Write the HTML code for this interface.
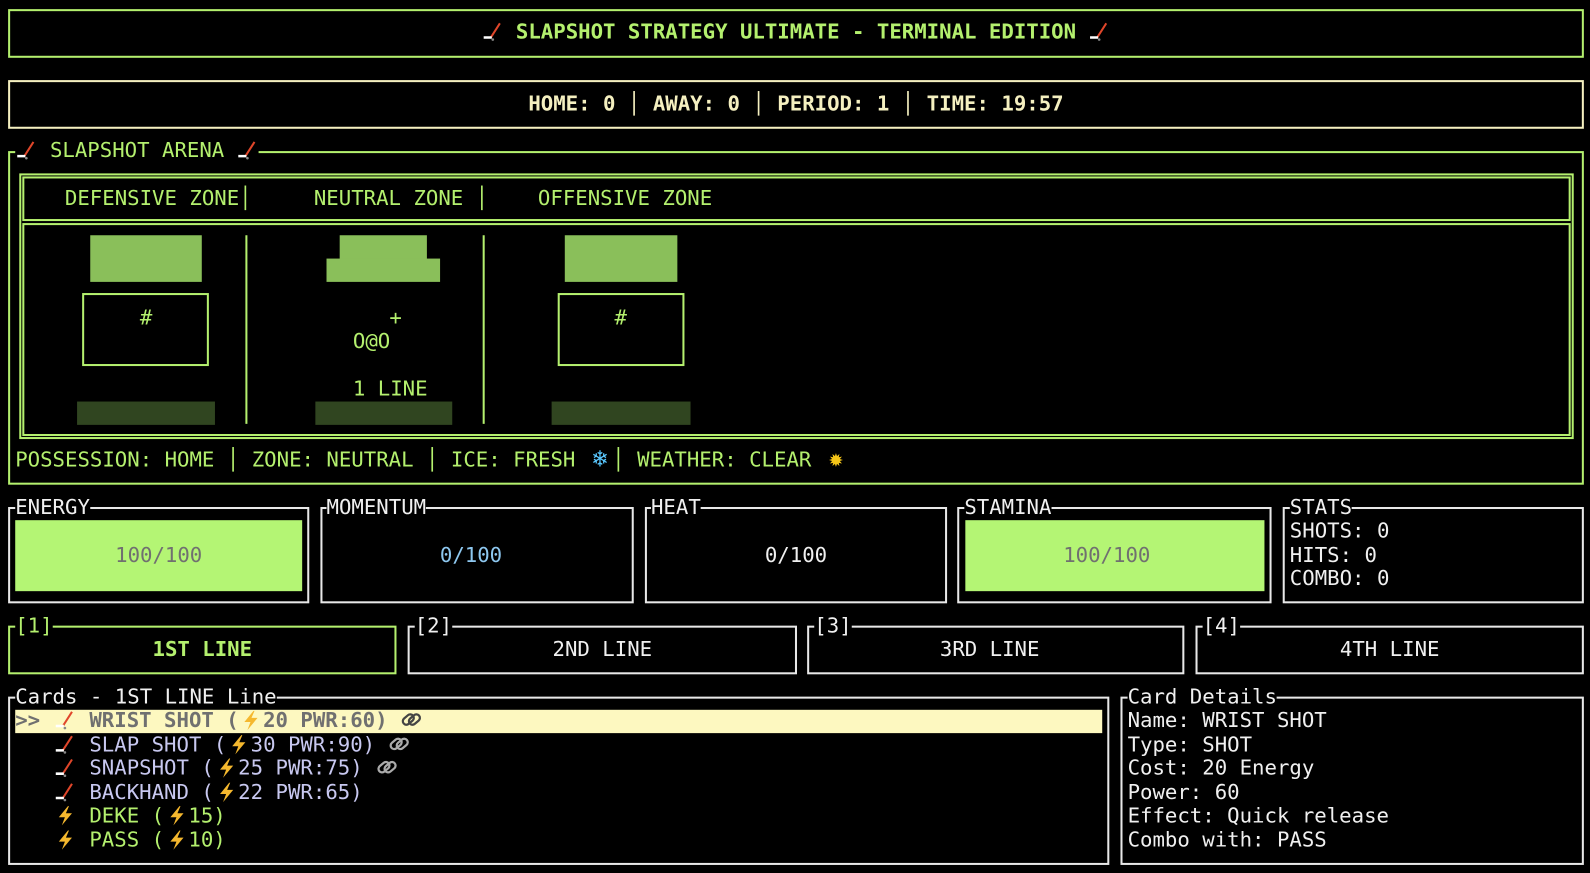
<!DOCTYPE html>
<html><head><meta charset="utf-8"><style>
*{margin:0;padding:0;box-sizing:border-box}
body{width:1590px;height:873px;background:#000;overflow:hidden}
#r{position:relative;width:1568px;height:861px;transform:scale(1.0140);transform-origin:0 0;font-family:"DejaVu Sans Mono","Liberation Mono",monospace;font-size:20.4px;line-height:23.5px;color:#b4f06e}
.a{position:absolute;white-space:pre}
.b{position:absolute;border:2px solid #b4f06e}
.w{border-color:#e8e8e8}
.lbl{position:absolute;background:#000;white-space:pre;line-height:23.5px}
.wt{color:#f0f0f0}
svg{vertical-align:-3px}
.ic{display:inline-block;width:24px;text-align:center;font-size:24px;line-height:20px}
</style></head><body><div id="r">
<svg width="0" height="0" style="position:absolute"><defs>
<symbol id="st" viewBox="0 0 22 20"><line x1="18" y1="2" x2="9" y2="16" stroke="#e0462a" stroke-width="2"/><line x1="2" y1="16" x2="10" y2="16" stroke="#fff" stroke-width="2.5"/><circle cx="11" cy="18" r="1.3" fill="#888"/></symbol>
<symbol id="bo" viewBox="0 0 24 20"><polygon points="15,1 6,12 12,12 9,20 19,8 13,8 16,1" fill="#f5b82e"/></symbol>
<symbol id="ch" viewBox="0 0 24 20"><g fill="none" stroke-width="2.2"><rect x="3" y="6" width="12" height="7" rx="3.5" transform="rotate(-40 9 10)"/><rect x="9" y="6" width="12" height="7" rx="3.5" transform="rotate(-40 15 10)"/></g></symbol>
</defs></svg>
<div class="b" style="left:8px;top:9px;width:1554px;height:48px"></div>
<div class="a" style="left:0;width:1570px;top:20px;text-align:center;font-weight:bold"><svg width="22" height="20"><use href="#st"/></svg> SLAPSHOT STRATEGY ULTIMATE - TERMINAL EDITION <svg width="22" height="20"><use href="#st"/></svg></div>
<div class="b" style="left:8px;top:79px;width:1554px;height:48px;border-color:#f5f0c0"></div>
<div class="a" style="left:0;width:1570px;top:91px;text-align:center;font-weight:bold;color:#f5f0c0">HOME: 0 │ AWAY: 0 │ PERIOD: 1 │ TIME: 19:57</div>
<div class="b" style="left:8px;top:149px;width:1554px;height:329px"></div>
<div class="lbl" style="left:15px;top:137px"><svg width="22" height="20"><use href="#st"/></svg> SLAPSHOT ARENA <svg width="22" height="20"><use href="#st"/></svg></div>
<div class="b" style="left:19px;top:171px;width:1533px;height:262px"></div>
<div class="b" style="left:22px;top:174px;width:1527px;height:44px"></div>
<div class="b" style="left:22px;top:220px;width:1527px;height:210px"></div>
<div class="a" style="left:64px;top:184px">DEFENSIVE ZONE│     NEUTRAL ZONE │    OFFENSIVE ZONE</div>
<div style="position:absolute;left:242px;top:232px;width:2px;height:186px;background:#b4f06e"></div>
<div style="position:absolute;left:476px;top:232px;width:2px;height:186px;background:#b4f06e"></div>
<div style="position:absolute;left:89px;top:232px;width:110px;height:46px;background:#8abf5a"></div>
<div style="position:absolute;left:335px;top:232px;width:86px;height:24px;background:#8abf5a"></div>
<div style="position:absolute;left:322px;top:255px;width:112px;height:23px;background:#8abf5a"></div>
<div style="position:absolute;left:557px;top:232px;width:111px;height:46px;background:#8abf5a"></div>
<div class="b" style="left:81px;top:289px;width:125px;height:72px"></div>
<div class="b" style="left:550px;top:289px;width:125px;height:72px"></div>
<div class="a" style="left:138px;top:302px">#</div>
<div class="a" style="left:606px;top:302px">#</div>
<div class="a" style="left:384px;top:302px">+</div>
<div class="a" style="left:348px;top:325px">O@O</div>
<div class="a" style="left:348px;top:372px">1 LINE</div>
<div style="position:absolute;left:76px;top:396px;width:136px;height:23px;background:#304520"></div>
<div style="position:absolute;left:311px;top:396px;width:135px;height:23px;background:#304520"></div>
<div style="position:absolute;left:544px;top:396px;width:137px;height:23px;background:#304520"></div>
<div class="a" style="left:15px;top:442px">POSSESSION: HOME │ ZONE: NEUTRAL │ ICE: FRESH <span class="ic" style="color:#5ac8ff">❄</span>│ WEATHER: CLEAR <span class="ic" style="color:#f5c518">✹</span></div>
<div class="b w" style="left:8px;top:500px;width:297px;height:95px"></div>
<div class="lbl wt" style="left:15px;top:489px">ENERGY</div>
<div style="position:absolute;left:15px;top:513px;width:283px;height:70px;background:#b4f574"></div>
<div class="a" style="left:15px;width:283px;text-align:center;top:536px;color:#707070">100/100</div>
<div class="b w" style="left:316px;top:500px;width:309px;height:95px"></div>
<div class="lbl wt" style="left:322px;top:489px">MOMENTUM</div>
<div class="a" style="left:310px;width:309px;text-align:center;top:536px;color:#8ec8f0">0/100</div>
<div class="b w" style="left:636px;top:500px;width:298px;height:95px"></div>
<div class="lbl wt" style="left:642px;top:489px">HEAT</div>
<div class="a wt" style="left:636px;width:298px;text-align:center;top:536px">0/100</div>
<div class="b w" style="left:944px;top:500px;width:310px;height:95px"></div>
<div class="lbl wt" style="left:951px;top:489px">STAMINA</div>
<div style="position:absolute;left:952px;top:513px;width:295px;height:70px;background:#b4f574"></div>
<div class="a" style="left:944px;width:295px;text-align:center;top:536px;color:#707070">100/100</div>
<div class="b w" style="left:1265px;top:500px;width:297px;height:95px"></div>
<div class="lbl wt" style="left:1272px;top:489px">STATS</div>
<div class="a wt" style="left:1272px;top:512px">SHOTS: 0
HITS: 0
COMBO: 0</div>
<div class="b" style="left:8px;top:617px;width:383px;height:48px"></div>
<div class="lbl" style="left:15px;top:606px">[1]</div>
<div class="a" style="left:8px;width:383px;text-align:center;top:629px;font-weight:bold">1ST LINE</div>
<div class="b w" style="left:402px;top:617px;width:384px;height:48px"></div>
<div class="lbl wt" style="left:409px;top:606px">[2]</div>
<div class="a wt" style="left:402px;width:384px;text-align:center;top:629px">2ND LINE</div>
<div class="b w" style="left:796px;top:617px;width:372px;height:48px"></div>
<div class="lbl wt" style="left:803px;top:606px">[3]</div>
<div class="a wt" style="left:790px;width:372px;text-align:center;top:629px">3RD LINE</div>
<div class="b w" style="left:1179px;top:617px;width:383px;height:48px"></div>
<div class="lbl wt" style="left:1186px;top:606px">[4]</div>
<div class="a wt" style="left:1179px;width:383px;text-align:center;top:629px">4TH LINE</div>
<div class="b w" style="left:8px;top:687px;width:1086px;height:166px"></div>
<div class="lbl wt" style="left:15px;top:676px">Cards - 1ST LINE Line</div>
<div style="position:absolute;left:15px;top:700px;width:1072px;height:23px;background:#fdf8c0"></div>
<div class="a" style="left:15px;top:699px;color:#707070;font-weight:bold">&gt;&gt; <svg width="24" height="20"><use href="#st"/></svg> WRIST SHOT (<svg width="24" height="20"><use href="#bo"/></svg>20 PWR:60) <svg width="24" height="20" stroke="#444"><use href="#ch"/></svg></div>
<div class="a" style="left:15px;top:723px;color:#c8c8f0">   <svg width="24" height="20"><use href="#st"/></svg> SLAP SHOT (<svg width="24" height="20"><use href="#bo"/></svg>30 PWR:90) <svg width="24" height="20" stroke="#aaa"><use href="#ch"/></svg></div>
<div class="a" style="left:15px;top:746px;color:#c8c8f0">   <svg width="24" height="20"><use href="#st"/></svg> SNAPSHOT (<svg width="24" height="20"><use href="#bo"/></svg>25 PWR:75) <svg width="24" height="20" stroke="#aaa"><use href="#ch"/></svg></div>
<div class="a" style="left:15px;top:770px;color:#c8c8f0">   <svg width="24" height="20"><use href="#st"/></svg> BACKHAND (<svg width="24" height="20"><use href="#bo"/></svg>22 PWR:65)</div>
<div class="a" style="left:15px;top:793px">   <svg width="24" height="20"><use href="#bo"/></svg> DEKE (<svg width="24" height="20"><use href="#bo"/></svg>15)</div>
<div class="a" style="left:15px;top:817px">   <svg width="24" height="20"><use href="#bo"/></svg> PASS (<svg width="24" height="20"><use href="#bo"/></svg>10)</div>
<div class="b w" style="left:1105px;top:687px;width:457px;height:166px"></div>
<div class="lbl wt" style="left:1112px;top:676px">Card Details</div>
<div class="a wt" style="left:1112px;top:699px">Name: WRIST SHOT
Type: SHOT
Cost: 20 Energy
Power: 60
Effect: Quick release
Combo with: PASS</div>
</div></body></html>
